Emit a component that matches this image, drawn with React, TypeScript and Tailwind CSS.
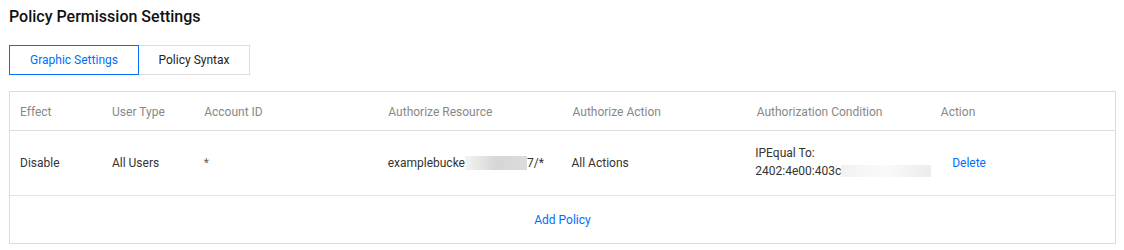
export default function App() {
  const headers = [
    "Effect",
    "User Type",
    "Account ID",
    "Authorize Resource",
    "Authorize Action",
    "Authorization Condition",
    "Action",
  ];
  const cols = "grid grid-cols-[1fr_1fr_2fr_2fr_2fr_2fr_2fr]";

  return (
    <div className="w-[1124px] h-[250px] bg-white pl-[9px] pr-[8px] font-['Roboto','Liberation_Sans',sans-serif] text-[12px]">
      <h1 className="pt-[7px] text-[16px] leading-[20px] font-medium text-[#111]">
        Policy Permission Settings
      </h1>

      {/* tabs */}
      <div className="mt-[18px] flex h-[30px]">
        <button className="w-[130px] border border-[#006eff] text-[#006eff] leading-[28px] relative z-10">
          Graphic Settings
        </button>
        <button className="w-[112px] -ml-px border border-[#dddddd] text-[#222] leading-[28px]">
          Policy Syntax
        </button>
      </div>

      {/* table */}
      <div className="mt-[16px] border border-[#dcdcdc] w-[1107px]">
        <div className={`${cols} h-[39px] items-center border-b border-[#dcdcdc] text-[#888888]`}>
          {headers.map((h) => (
            <div key={h} className="pl-[10px] pt-px">
              {h}
            </div>
          ))}
        </div>

        <div className={`${cols} h-[65px] items-center border-b border-[#e5e5e5] text-[#333]`}>
          <div className="pl-[10px]">Disable</div>
          <div className="pl-[10px]">All Users</div>
          <div className="pl-[10px] text-[#666]">*</div>
          <div className="pl-[10px] flex items-center">
            <span>examplebucke</span>
            <span className="inline-block w-[62px] h-[14px] bg-gradient-to-r from-[#f4f4f4] via-[#d6d6d6] to-[#dcdcdc]" />
            <span>7/*</span>
          </div>
          <div className="pl-[10px]">All Actions</div>
          <div className="pl-[10px] leading-[18px] pb-[2px]">
            <div>IPEqual To:</div>
            <div className="flex items-center">
              <span>2402:4e00:403c</span>
              <span className="inline-block w-[90px] h-[12px] bg-gradient-to-r from-[#f2f2f2] via-[#fafafa] to-[#ececec]" />
            </div>
          </div>
          <div className="pl-[21px]">
            <a className="text-[#006eff] cursor-pointer">Delete</a>
          </div>
        </div>

        <div className="h-[47px] flex items-center justify-center">
          <a className="text-[#006eff] cursor-pointer">Add Policy</a>
        </div>
      </div>
    </div>
  );
}
